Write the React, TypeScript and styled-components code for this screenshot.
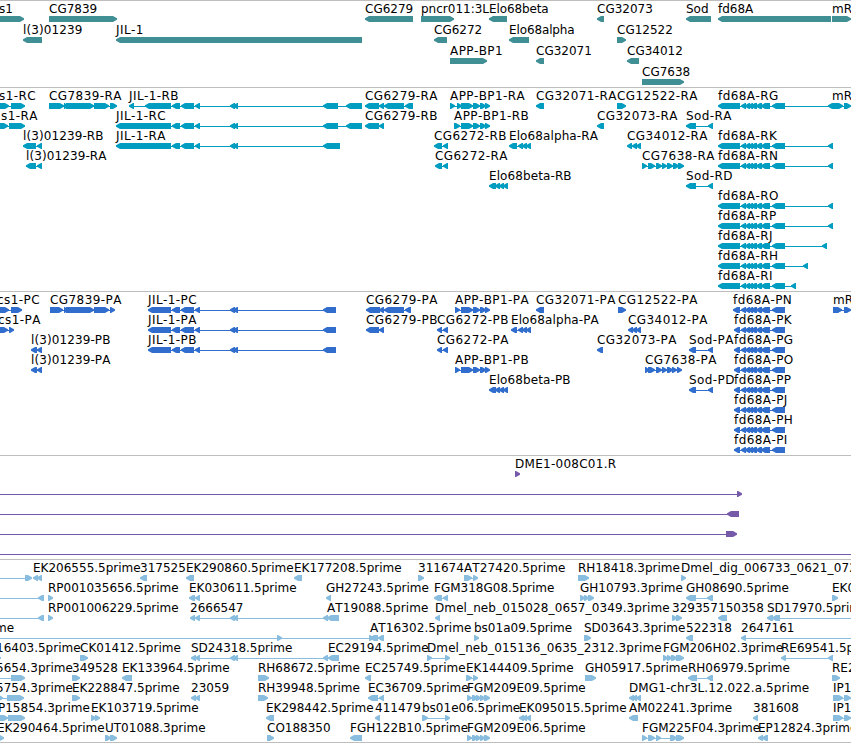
import styled, { createGlobalStyle } from "styled-components";

type Block = [number, number];

interface FeatureData {
  name?: string;
  dir: "l" | "r";
  blocks: Block[];
  // map position of the label when it is not the feature start
  labelAt?: number;
  // connector extent when the feature runs out of the visible range
  line?: Block;
}

interface TrackData {
  id: string;
  color: string;
  laneHeight: number;
  height: number;
  lanes: FeatureData[][];
}

const MAP_WIDTH = 851;
const GLYPH_HEIGHT = 6;
const TIP = 5;

const GlobalStyle = createGlobalStyle`
  body {
    margin: 0;
    background: #ffffff;
  }
`;

const MapView = styled.main`
  width: ${MAP_WIDTH}px;
  height: 743px;
  box-sizing: border-box;
  overflow: hidden;
  display: flex;
  flex-direction: column;
  border-bottom: 1px solid #bebebe;
  background: #ffffff;
  color: #000000;
  font-family: "DejaVu Sans", Verdana, sans-serif;
  font-size: 12px;
  line-height: 14px;
  font-kerning: none;
`;

const TrackPanel = styled.section<{ $height: number; $color: string }>`
  box-sizing: border-box;
  flex: none;
  height: ${({ $height }) => $height}px;
  padding-top: 1px;
  border-top: 1px solid #bebebe;
  color: ${({ $color }) => $color};
`;

const Lane = styled.div<{ $height: number }>`
  position: relative;
  height: ${({ $height }) => $height}px;
`;

const FeatureBox = styled.div`
  position: absolute;
  top: 0;
  display: flex;
  flex-direction: column;
  white-space: nowrap;
`;

const Label = styled.span<{ $spacing: number }>`
  height: 14px;
  color: #000000;
  letter-spacing: ${({ $spacing }) => $spacing}px;
`;

const Glyph = styled.svg`
  display: block;
  flex: none;
  height: ${GLYPH_HEIGHT}px;
  fill: currentColor;
  overflow: visible;
`;

const labelSpacing = (name = "") => {
  if (/^(Elo|l\(3\)|Dmel|DMG|AT)/.test(name)) {
    return name.startsWith("Elo") && !name.includes("-") ? -0.12 : 0.1;
  }
  if (name.startsWith("DME1")) return 0.27;
  return name.includes("-") ? 0.42 : 0;
};

const arrow = ([a, b]: Block, dir: "l" | "r") => {
  const tip = Math.min(TIP, b - a);
  return dir === "r"
    ? `${a},0 ${b - tip + 1},0 ${b},2.3 ${b},3.7 ${b - tip + 1},6 ${a},6`
    : `${b},0 ${a + tip - 1},0 ${a},2.3 ${a},3.7 ${a + tip - 1},6 ${b},6`;
};

const Feature = ({ name, dir, blocks, labelAt, line }: FeatureData) => {
  const from = line ? line[0] : blocks[0][0];
  const to = line ? line[1] : blocks[blocks.length - 1][1];
  const left = labelAt ?? from;
  const start = blocks.length ? Math.min(from, blocks[0][0]) : from;
  const end = blocks.length
    ? Math.max(to, blocks[blocks.length - 1][1])
    : to;

  return (
    <FeatureBox style={{ left }}>
      <Label $spacing={labelSpacing(name)}>{name}</Label>
      <Glyph
        width={end - start}
        viewBox={`${left} 0 ${end - start} ${GLYPH_HEIGHT}`}
      >
        {(line || blocks.length > 1) && (
          <rect x={from + 1} y={3} width={to - from - 2} height={1} />
        )}
        {blocks.map((block) => (
          <polygon key={block.join("-")} points={arrow(block, dir)} />
        ))}
      </Glyph>
    </FeatureBox>
  );
};

const l = (name: string, ...blocks: Block[]): FeatureData => ({
  name,
  dir: "l",
  blocks,
});

const r = (name: string, ...blocks: Block[]): FeatureData => ({
  name,
  dir: "r",
  blocks,
});

const jilTail = (end: number): Block[] => [
  [172, 180],
  [181, 194],
  [195, 200],
  [230, 235],
  [233, 238],
  [323, end],
];
const jilLong: Block[] = [...jilTail(338), [346, 362]];

const fdExons: Block[] = [
  [741, 746],
  [745, 750],
  [748, 753],
  [751, 757],
  [756, 762],
  [761, 770],
  [772, 785],
];
const fdRna = (name: string, last: number) =>
  l(name, [718, 740], ...fdExons, [last - 5, last]);
const fdProtein = (name: string, start = 734) =>
  l(name, [start, 740], ...fdExons);

const appExons: Block[] = [
  [461, 473],
  [473, 480],
  [480, 486],
  [485, 490],
];
const cg7638Exons: Block[] = [
  [648, 655],
  [656, 662],
  [662, 667],
  [667, 673],
];
const cg7839Exons: Block[] = [
  [64, 67],
  [66, 94],
  [94, 109],
];
const alphaExons: Block[] = [
  [518, 523],
  [522, 527],
  [526, 531],
];
const betaExons: Block[] = [
  [489, 496],
  [495, 500],
  [499, 504],
  [503, 508],
];
const fgmExons: Block[] = [
  [467, 472],
  [472, 478],
  [476, 481],
  [480, 485],
  [484, 490],
];

const genes: FeatureData[][] = [
  [
    { ...r("s1", [-10, 24]), labelAt: -1 },
    r("CG7839", [49, 117]),
    l("CG6279", [365, 413]),
    r("pncr011:3L", [421, 454]),
    l("Elo68beta", [489, 507]),
    l("CG32073", [597, 604]),
    l("Sod", [686, 711]),
    l("fd68A", [718, 831]),
    r("mR", [832, 851]),
  ],
  [
    l("l(3)01239", [23, 42]),
    l("JIL-1", [116, 362]),
    l("CG6272", [434, 447]),
    l("Elo68alpha", [509, 529]),
    r("CG12522", [617, 626]),
  ],
  [
    r("APP-BP1", [450, 487]),
    l("CG32071", [536, 544]),
    l("CG34012", [627, 639]),
  ],
  [r("CG7638", [642, 684])],
];

const transcripts: FeatureData[][] = [
  [
    { ...r("s1-RC", [-5, 9], [11, 25]), labelAt: -1 },
    r("CG7839-RA", [49, 64], ...cg7839Exons, [110, 117]),
    l("JIL-1-RB", [129, 134], [145, 171], ...jilLong),
    l("CG6279-RA", [365, 379], [379, 384], [384, 404], [405, 413]),
    r("APP-BP1-RA", [450, 455], [457, 462], ...appExons),
    l("CG32071-RA", [536, 544]),
    r("CG12522-RA", [617, 626]),
    fdRna("fd68A-RG", 833),
    { ...r("mR", [833, 843], [844, 851]), labelAt: 832 },
  ],
  [
    { ...r("s1-RA", [-5, 8], [9, 25]), labelAt: 1 },
    l("JIL-1-RC", [116, 171], ...jilLong),
    l("CG6279-RB", [365, 379], [379, 384]),
    r("APP-BP1-RB", [454, 460], ...appExons),
    l("CG32073-RA", [597, 604]),
    l("Sod-RA", [686, 696], [708, 713]),
  ],
  [
    l("l(3)01239-RB", [23, 36], [37, 42]),
    l("JIL-1-RA", [116, 171], ...jilTail(340)),
    l("CG6272-RB", [434, 442], [443, 448]),
    l("Elo68alpha-RA", [509, 517], ...alphaExons),
    l("CG34012-RA", [627, 632], [632, 637], [636, 641]),
    fdRna("fd68A-RK", 833),
  ],
  [
    l("l(3)01239-RA", [26, 36], [37, 42]),
    l("CG6272-RA", [435, 442], [443, 448]),
    r("CG7638-RA", [642, 647], ...cg7638Exons, [673, 679], [678, 684]),
    fdRna("fd68A-RN", 833),
  ],
  [l("Elo68beta-RB", ...betaExons), l("Sod-RD", [686, 696], [708, 713])],
  [fdRna("fd68A-RO", 833)],
  [fdRna("fd68A-RP", 833)],
  [fdRna("fd68A-RJ", 827)],
  [fdRna("fd68A-RH", 808)],
  [fdRna("fd68A-RI", 796)],
];

const proteins: FeatureData[][] = [
  [
    { ...r("cs1-PC", [-5, 9], [11, 22]), labelAt: -3 },
    r("CG7839-PA", [50, 63], ...cg7839Exons, [110, 115]),
    l("JIL-1-PC", [148, 171], ...jilTail(336)),
    l("CG6279-PA", [366, 380], [379, 384], [384, 404], [405, 411]),
    r("APP-BP1-PA", [455, 460], ...appExons),
    l("CG32071-PA", [536, 544]),
    r("CG12522-PA", [618, 626]),
    fdProtein("fd68A-PN", 733),
    r("mR", [833, 842], [844, 851]),
  ],
  [
    { ...r("cs1-PA", [-5, 8], [9, 14]), labelAt: -2 },
    l("JIL-1-PA", [148, 171], ...jilTail(336)),
    l("CG6279-PB", [366, 379], [379, 384]),
    l("CG6272-PB", [437, 442], [443, 448]),
    l("Elo68alpha-PA", [511, 517], ...alphaExons),
    l("CG34012-PA", [628, 633], [632, 637], [636, 641]),
    fdProtein("fd68A-PK"),
  ],
  [
    l("l(3)01239-PB", [31, 37], [37, 42]),
    l("JIL-1-PB", [148, 171], ...jilTail(336)),
    l("CG6272-PA", [437, 442], [443, 448]),
    l("CG32073-PA", [597, 603]),
    l("Sod-PA", [689, 696], [708, 713]),
    fdProtein("fd68A-PG"),
  ],
  [
    l("l(3)01239-PA", [31, 37], [37, 42]),
    r("APP-BP1-PB", [455, 460], ...appExons),
    r("CG7638-PA", [645, 649], ...cg7638Exons, [672, 677], [677, 682]),
    fdProtein("fd68A-PO"),
  ],
  [
    l("Elo68beta-PB", ...betaExons),
    l("Sod-PD", [689, 696], [708, 713]),
    fdProtein("fd68A-PP"),
  ],
  [fdProtein("fd68A-PJ")],
  [fdProtein("fd68A-PH")],
  [fdProtein("fd68A-PI")],
];

const clones: FeatureData[][] = [
  [r("DME1-008C01.R", [515, 520])],
  [{ dir: "r", blocks: [[737, 742]], line: [-5, 742] }],
  [{ dir: "l", blocks: [[727, 739]], line: [-5, 735] }],
  [{ dir: "r", blocks: [[726, 737]], line: [-5, 730] }],
  [{ dir: "r", blocks: [], line: [-5, 856] }],
];

const ests: FeatureData[][] = [
  [
    { dir: "r", blocks: [[25, 32]], line: [-5, 30] },
    l("EK206555.5prime", [33, 38], [37, 42]),
    l("317525", [140, 147]),
    l("EK290860.5prime", [186, 194]),
    l("EK177208.5prime", [294, 302]),
    r("311674", [418, 424]),
    r("AT27420.5prime", [464, 472], [473, 478]),
    r("RH18418.3prime", [578, 589]),
    r("Dmel_dig_006733_0621_072", [681, 686]),
  ],
  [
    { dir: "l", blocks: [[38, 44]], line: [-5, 42] },
    r("RP001035656.5prime", [48, 53]),
    l("EK030611.5prime", [189, 195], [195, 200]),
    l("GH27243.5prime", [326, 331]),
    l("FGM318G08.5prime", [434, 442], [443, 448]),
    r("GH10793.3prime", [580, 585], [584, 589], [588, 594]),
    l("GH08690.5prime", [686, 696], [707, 713]),
    r("EK0", [832, 838]),
  ],
  [
    { dir: "l", blocks: [[38, 44]], line: [-5, 42] },
    r("RP001006229.5prime", [48, 53]),
    l("2666547", [190, 195], [195, 200], [230, 235], [233, 238], [323, 328]),
    l("AT19088.5prime", [327, 339]),
    l("Dmel_neb_015028_0657_0349.3prime", [435, 440]),
    r("329357", [672, 677], [676, 682]),
    l("150358", [718, 727]),
    { ...l("SD17970.5prime", [767, 773], [772, 780]), line: [767, 856] },
  ],
  [
    { ...r("me", [277, 282], [369, 374]), labelAt: -5, line: [-5, 374] },
    l("AT16302.5prime", [370, 378], [378, 384]),
    r("bs01a09.5prime", [474, 479]),
    r("SD03643.3prime", [584, 591]),
    l("522318", [686, 693]),
    { ...l("2647161", [741, 746]), line: [741, 856] },
  ],
  [
    { ...r("16403.5prime", [-6, 1]), labelAt: -4 },
    r("CK01412.5prime", [80, 88]),
    l(
      "SD24318.5prime",
      [191, 196],
      [195, 200],
      [230, 235],
      [233, 238],
      [323, 328],
    ),
    l("EC29194.5prime", [328, 339]),
    r("Dmel_neb_015136_0635_2312.3prime", [427, 432], [445, 450]),
    r("FGM206H02.3prime", [663, 668], [667, 672], [671, 677], [676, 684]),
    l("RE69541.5p", [781, 786], [828, 833]),
  ],
  [
    { ...r("5654.3prime", [11, 25]), labelAt: -4, line: [-5, 20] },
    r("349528", [72, 80]),
    l("EK133964.5prime", [122, 132]),
    r("RH68672.5prime", [258, 269]),
    l("EC25749.5prime", [365, 371]),
    r("EK144409.5prime", [466, 472], [473, 478]),
    r("GH05917.5prime", [585, 596]),
    l("RH06979.5prime", [688, 697], [707, 713]),
    r("RE2", [832, 840]),
  ],
  [
    { ...r("5754.3prime", [-4, 3], [7, 24]), labelAt: -4 },
    r("EK228847.5prime", [72, 80]),
    l("23059", [191, 196], [195, 200]),
    r("RH39948.5prime", [258, 268]),
    l("EC36709.5prime", [368, 378], [379, 384]),
    r("FGM209E09.5prime", ...fgmExons),
    l("DMG1-chr3L.12.022.a.5prime", [629, 634], [632, 637], [636, 641]),
    r("IP1", [833, 843], [844, 851]),
  ],
  [
    { ...r("P15854.3prime", [-5, 8], [8, 25]), labelAt: -2 },
    r("EK103719.5prime", [91, 96], [95, 100]),
    l("EK298442.5prime", [266, 274]),
    l("411479", [375, 380]),
    r("bs01e06.5prime", [422, 428], [445, 450]),
    l("EK095015.5prime", [519, 524], [522, 527], [526, 531]),
    l("AM02241.3prime", [629, 638]),
    l("381608", [753, 758]),
    r("IP1", [833, 843], [844, 851]),
  ],
  [
    { ...r("EK290464.5prime", [-5, 4]), labelAt: -3 },
    r("UT01088.3prime", [105, 111], [110, 117]),
    r("CO188350", [267, 274]),
    l("FGH122B10.5prime", [350, 362]),
    r("FGM209E06.5prime", ...fgmExons),
    r(
      "FGM225F04.3prime",
      [642, 647],
      [648, 655],
      [656, 661],
      [670, 677],
      [676, 684],
    ),
    l("EP12824.3prime", [758, 763], [762, 768]),
  ],
];

const tracks: TrackData[] = [
  { id: "genes", color: "#3f8f95", laneHeight: 21, height: 87, lanes: genes },
  {
    id: "transcripts",
    color: "#009dc0",
    laneHeight: 20,
    height: 204,
    lanes: transcripts,
  },
  {
    id: "proteins",
    color: "#316dcd",
    laneHeight: 20,
    height: 164,
    lanes: proteins,
  },
  { id: "clones", color: "#7759a9", laneHeight: 20, height: 104, lanes: clones },
  { id: "ests", color: "#89bddf", laneHeight: 20, height: 183, lanes: ests },
];

const Track = ({ track }: { track: TrackData }) => (
  <TrackPanel $height={track.height} $color={track.color}>
    {track.lanes.map((lane, index) => (
      <Lane key={index} $height={track.laneHeight}>
        {lane.map((feature, i) => (
          <Feature key={i} {...feature} />
        ))}
      </Lane>
    ))}
  </TrackPanel>
);

export default function App() {
  return (
    <>
      <GlobalStyle />
      <MapView>
        {tracks.map((track) => (
          <Track key={track.id} track={track} />
        ))}
      </MapView>
    </>
  );
}
